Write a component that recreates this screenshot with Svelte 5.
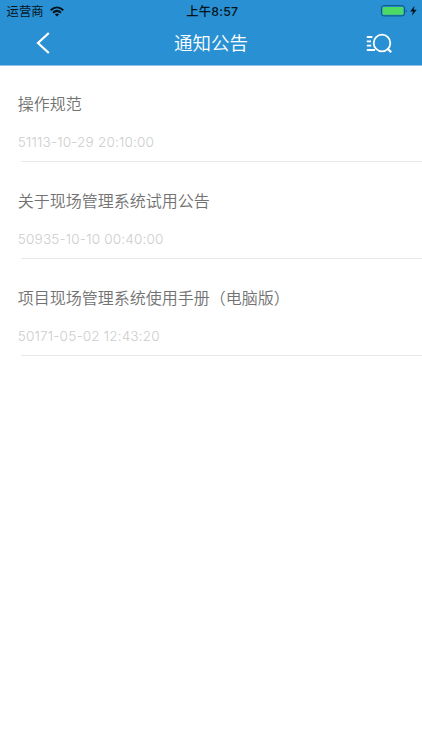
<script>
  const notices = [
    { title: "操作规范", time: "51113-10-29 20:10:00" },
    { title: "关于现场管理系统试用公告", time: "50935-10-10 00:40:00" },
    { title: "项目现场管理系统使用手册（电脑版）", time: "50171-05-02 12:43:20" },
  ];
</script>

<div class="page">
  <header class="header">
    <div class="status-bar">
      <div class="carrier">
        <span>运营商</span>
        <svg class="wifi" viewBox="0 0 14 11" width="14" height="11">
          <path d="M0.7 4.2C4.5 0.7 9.5 0.7 13.3 4.2" />
          <path d="M3 6.7C5.4 4.5 8.6 4.5 11 6.7" />
          <path class="wifi-dot" d="M4.8 8.3Q7 6.6 9.2 8.3L7 10.6Z" />
        </svg>
      </div>
      <div class="clock">上午8:57</div>
      <div class="power">
        <svg viewBox="0 0 38 12" width="38" height="12">
          <rect x="1.4" y="0.7" width="23.2" height="10.2" rx="2.4" fill="none" stroke="#0e547f" />
          <rect x="2.6" y="1.9" width="20.8" height="7.8" rx="1.2" fill="#4cd964" />
          <path d="M25.9 4.2Q27.7 6 25.9 7.8Z" fill="#0e547f" />
          <path d="M34.6 0.7L30.2 6.4H33L31.9 10.7L36.7 4.8H33.7Z" fill="#06131c" />
        </svg>
      </div>
    </div>

    <div class="nav-bar">
      <button class="icon-button" aria-label="返回">
        <svg viewBox="0 0 14 22" width="14" height="22">
          <path d="M12.8 1L2 11L12.8 21" fill="none" stroke="#fff" stroke-width="2.2" />
        </svg>
      </button>
      <h1>通知公告</h1>
      <button class="icon-button search" aria-label="搜索">
        <svg viewBox="0 0 26 20" width="26" height="20">
          <g fill="none" stroke="#fff" stroke-width="1.8">
            <path d="M0.8 4H6.4M0.8 8.3H5M0.8 12.6H5.2M0.8 17H9" />
            <circle cx="16" cy="10" r="8.3" />
            <path d="M21.3 15.4L25.2 19.2" stroke-width="2.2" />
          </g>
        </svg>
      </button>
    </div>
  </header>

  <main class="list">
    {#each notices as notice}
      <article class="notice">
        <h2>{notice.title}</h2>
        <time>{notice.time}</time>
      </article>
    {/each}
  </main>
</div>

<style>
  :global(body) {
    background: #fff;
  }

  .page {
    min-height: 750px;
    background: #fff;
    font-family: Inter, "Noto Sans CJK SC", sans-serif;
  }

  .header {
    box-sizing: border-box;
    height: 66px;
    background: #2991d3;
    border-bottom: 1px solid #8fc5e8;
    background-clip: padding-box;
  }

  .status-bar {
    display: grid;
    grid-template-columns: 1fr auto 1fr;
    align-items: center;
    height: 22px;
    padding: 0 4px 0 6.6px;
    color: #06131c;
    font-size: 12.3px;
    line-height: 22px;
  }

  .carrier {
    display: flex;
    align-items: center;
    gap: 6px;
  }

  .carrier span {
    padding-top: 1px;
    line-height: 21px;
  }

  .wifi path {
    fill: none;
    stroke: #06131c;
    stroke-width: 2;
  }

  .wifi .wifi-dot {
    fill: #06131c;
    stroke: none;
  }

  .clock {
    padding-top: 1px;
    font-weight: 500;
    letter-spacing: 0.2px;
    line-height: 21px;
  }

  .power {
    display: flex;
    justify-content: flex-end;
  }

  .nav-bar {
    display: grid;
    grid-template-columns: 1fr auto 1fr;
    align-items: center;
    height: 42px;
    padding: 0 30px;
  }

  .nav-bar h1 {
    margin: 0;
    color: #fff;
    font-size: 18.5px;
    font-weight: 350;
    line-height: 42px;
  }

  .icon-button {
    display: flex;
    justify-self: start;
    margin-left: 6px;
    padding: 0;
    border: 0;
    background: none;
  }

  .search {
    justify-self: end;
  }

  .list {
    margin-top: -0.7px;
  }

  .notice {
    box-sizing: border-box;
    height: 96.8px;
    padding: 27px 0 0 17.8px;
    background: linear-gradient(#e8e8e8, #e8e8e8) 20.5px 100% / 100% 1px no-repeat;
  }

  .notice h2 {
    margin: 0;
    color: #727272;
    font-size: 16px;
    font-weight: 350;
    line-height: 24px;
  }

  .notice time {
    display: block;
    margin-top: 16px;
    color: #cdcdcd;
    font-size: 13.6px;
    font-weight: 350;
    letter-spacing: 0.15px;
    line-height: 20px;
  }
</style>
